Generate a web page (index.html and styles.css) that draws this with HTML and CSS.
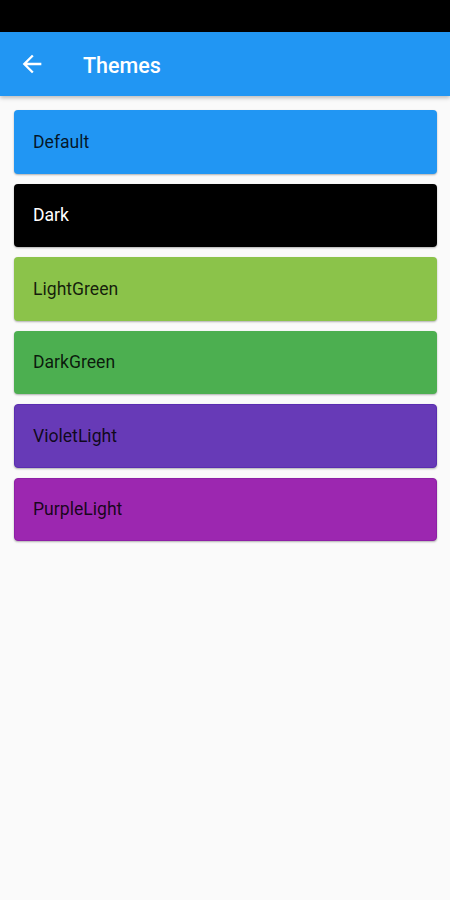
FILE: index.html
```html
<!DOCTYPE html>
<html lang="en">
<head>
  <meta charset="UTF-8" />
  <meta name="viewport" content="width=device-width, initial-scale=1" />
  <title>Themes</title>
  <link rel="stylesheet" href="styles.css">
</head>
<body>
  <div class="status-bar"></div>
  <header class="app-bar">
    <svg class="back" width="28" height="28" viewBox="0 0 24 24">
      <path d="M20 11H7.83l5.59-5.59L12 4l-8 8 8 8 1.41-1.41L7.83 13H20v-2z" fill="#fff"/>
    </svg>
    <h1>Themes</h1>
  </header>

  <main class="list">
    <div class="theme default">Default</div>
    <div class="theme dark">Dark</div>
    <div class="theme light-green">LightGreen</div>
    <div class="theme dark-green">DarkGreen</div>
    <div class="theme violet">VioletLight</div>
    <div class="theme purple">PurpleLight</div>
  </main>
</body>
</html>
```

FILE: styles.css
```css
body {
  margin: 0;
  background: #fafafa;
  font-family: Roboto, "Noto Sans", sans-serif;
  height: 900px;
}
.status-bar {
  height: 32px;
  background: #000;
}
.app-bar {
  height: 64px;
  background: #2196f3;
  display: flex;
  align-items: center;
  padding-left: 18px;
  box-shadow: 0 2px 4px rgba(0,0,0,0.25);
  position: relative;
}
.app-bar h1 {
  margin: 2px 0 0 37px;
  color: #fff;
  font-size: 21.5px;
  font-weight: 500;
}
.list {
  display: flex;
  flex-direction: column;
  gap: 10px;
  padding: 14px 13px 0 14px;
}
.theme {
  height: 63.5px;
  box-sizing: border-box;
  display: flex;
  align-items: center;
  padding-left: 19px;
  border-radius: 4px;
  font-size: 17.6px;
  color: rgba(0,0,0,0.85);
  box-shadow: 0 1px 2px rgba(0,0,0,0.3);
}
.default { background: #2196f3; }
.dark { background: #000; color: #fff; }
.light-green { background: #8bc34a; }
.dark-green { background: #4caf50; }
.violet { background: #673ab7; border: 1px solid #5a2db0; padding-left: 18px; }
.purple { background: #9c27b0; border: 1px solid #8e1fa6; padding-left: 18px; }
```
